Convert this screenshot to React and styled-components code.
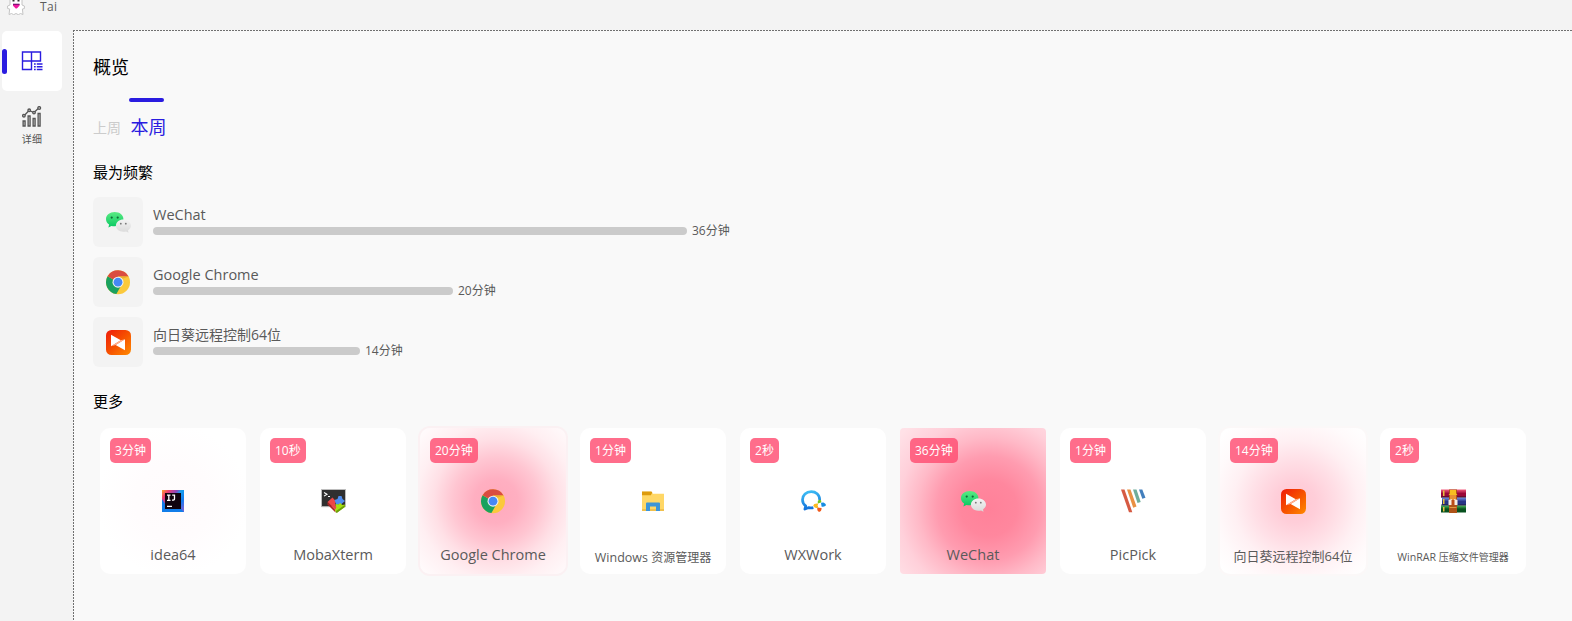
import React from "react";
import styled, { createGlobalStyle } from "styled-components";

const Global = createGlobalStyle`
  *{box-sizing:border-box}
  body{margin:0;background:#f3f3f3;overflow:hidden;font-family:"Open Sans","Noto Sans CJK SC",sans-serif}
  svg{display:block}
`;
const Window = styled.div`height:100vh;display:flex;flex-direction:column;overflow:hidden;`;
const TitleBar = styled.header`height:30px;flex:none;display:flex;align-items:flex-start;padding-left:7px;`;
const AppName = styled.span`margin-left:15px;font-size:12px;line-height:14px;color:#5c5c5c;letter-spacing:.3px;`;
const Body = styled.div`flex:1;display:flex;min-height:0;`;
const Sidebar = styled.nav`width:73px;flex:none;padding:1px 0 0 2px;display:flex;flex-direction:column;gap:5px;`;
const NavItem = styled.div`
  position:relative;width:60px;height:60px;border-radius:5px;display:flex;flex-direction:column;align-items:center;
  justify-content:center;gap:5px;background:${p => p.$active ? "#fff" : "transparent"};
  color:#555;font-size:10px;line-height:15px;
`;
const NavMarker = styled.i`position:absolute;left:0;top:18px;width:5px;height:25px;border-radius:2.5px;background:#2a1ce0;`;
const NavText = styled.span`letter-spacing:.2px;`;
const Main = styled.main`
  flex:1;padding:25px 0 0 20px;
  background:
    repeating-linear-gradient(90deg,#707070 0 2px,#f9f9f9 2px 3px) 0 0/100% 1px no-repeat,
    repeating-linear-gradient(180deg,#707070 0 2px,#f9f9f9 2px 3px) 0 0/1px 100% no-repeat,
    #f9f9f9;
`;
const Title = styled.h1`margin:0;font-size:18px;line-height:24px;font-weight:400;color:#000;`;
const Tabs = styled.div`display:flex;align-items:flex-end;gap:9.5px;height:43px;margin-top:19px;`;
const Tab = styled.div`
  display:flex;flex-direction:column;justify-content:space-between;line-height:26px;
  font-size:${p => p.$active ? 18 : 14}px;color:${p => p.$active ? "#2a1ce0" : "#ccc"};
  height:${p => p.$active ? "43px" : "auto"};
  padding-bottom:${p => p.$active ? 1 : 0}px;
`;
const TabLine = styled.i`width:35px;height:4px;border-radius:2px;background:#2a1ce0;margin-left:-1.5px;`;
const Section = styled.h2`margin:${p => p.$top}px 0 0;font-size:15px;line-height:22px;font-weight:400;color:#000;`;
const Ranking = styled.div`display:flex;flex-direction:column;gap:10px;margin-top:14px;`;
const Row = styled.div`display:flex;gap:10px;height:50px;`;
const IconTile = styled.div`width:50px;height:50px;border-radius:6px;background:#f3f3f3;display:flex;align-items:center;justify-content:center;`;
const Info = styled.div`padding-top:7px;`;
const AppLabel = styled.div`
  font-size:${p => p.$size}px;line-height:22px;color:#5a5a5a;white-space:nowrap;
`;
const Latin = styled.span`font-size:${p => p.$scale || 1}em;`;
const BarLine = styled.div`display:flex;align-items:center;gap:5px;height:10px;font-size:12px;color:#5a5a5a;white-space:nowrap;`;
const BarTime = styled.span`line-height:16px;`;
const Bar = styled.div`height:8px;border-radius:4px;background:#cbcbcb;`;
const Grid = styled.div`display:flex;gap:14px;margin:16px 0 0 7px;`;
const Card = styled.article`
  width:146px;height:146px;flex:none;border-radius:${p => p.$radius || 10}px;padding:10px;
  display:flex;flex-direction:column;align-items:center;background:${p => p.$glow || "#fff"};
  box-shadow:${p => p.$ring ? `0 0 0 2px ${p.$ring}` : "none"};
`;
const Badge = styled.span`
  align-self:flex-start;height:25px;line-height:25px;padding:0 5px;border-radius:5px;font-size:12px;color:#fff;
  background:rgba(255,75,112,.81);white-space:nowrap;
`;
const CardIcon = styled.div`margin-top:26px;height:25px;`;
const CardName = styled(AppLabel)`margin-top:auto;margin-bottom:-${p => p.$drop || 2}px;`;

const Svg = ({ children, size = 25, box = 25 }) => <svg width={size} height={size} viewBox={`0 0 ${box} ${box}`}>{children}</svg>;

const Ghost = () => (
  <svg width="18" height="15" viewBox="0 0 18 15">
    <path d="M3-2h12v7l2.400 1v2.500l-2 .5.600 5.500-2.500-1-2.200 1.200L9 13.500l-2.300 1.200-2.200-1.200-2.500 1L2.700 9 .6 8.500V6L3 5z" fill="#fff" stroke="#c4c4c4" />
    <path d="M5.500 0h2v1.500h-2zM10.500 0h2v1.500h-2z" fill="#333" />
    <path d="M6 4h6.500v1.800L9.800 8.500H8.700L6 5.800z" fill="#f01aa0" /><path d="M6 3.700h6.500v1.200H6z" fill="#7a1170" />
  </svg>
);
const OverviewIcon = () => (
  <svg width="22" height="20" viewBox="0 0 22 20" fill="none" stroke="#2a1ce0">
    <path d="M1.500 1h18v9h-18zM10.500 1v17.500h-9V10M10.500 10v8.500" strokeWidth="1.400" />
    <path d="M13 13h1.700M15.800 13H21.500M13 15.700h1.700M15.800 15.700H21.500M13 18.500h1.700M15.800 18.500H21.500" strokeWidth="1.400" />
  </svg>
);
const DetailIcon = () => (
  <svg width="20" height="21" viewBox="0 0 20 21" fill="#ccc" stroke="#555" strokeWidth="1.300">
    <path d="M1.100 15h2v5h-2zM6.100 10h2v10h-2zM11.100 12.500h2V20h-2zM16.100 7.500h2V20h-2z" />
    <path d="M2.500 9.200L7 4.500l5 2 4.500-4.200" fill="none" />
    <circle cx="1.900" cy="9.700" r="1.300" /><circle cx="7.200" cy="4.300" r="1.300" /><circle cx="12" cy="6.600" r="1.300" /><circle cx="17.200" cy="2" r="1.400" />
  </svg>
);
const WeChat = () => (
  <Svg>
    <defs>
      <linearGradient id="wg" x2="0" y2="1"><stop stopColor="#5bea83" /><stop offset="1" stopColor="#07c862" /></linearGradient>
      <linearGradient id="ww" x2="0" y2="1"><stop stopColor="#f3f3f3" /><stop offset="1" stopColor="#dadada" /></linearGradient>
    </defs>
    <path d="M8.700 2.100C3.800 2.100 0 5.200 0 9.100c0 2.300 1.200 4.200 3.100 5.500l-.7 3 3-1.700c1 .3 2.100.4 3.300.4 4.800 0 8.700-3 8.700-7.200s-3.900-7-8.700-7z" fill="url(#wg)" />
    <path d="M17.400 9.400c-4.200 0-7.500 2.700-7.500 6.200s3.300 6.200 7.500 6.200c1 0 1.900-.1 2.700-.4l2.400 1.300-.5-2.300c1.800-1.100 3-2.800 3-4.800 0-3.500-3.400-6.200-7.600-6.200z" fill="url(#ww)" />
    <circle cx="5.700" cy="7.600" r="1.100" fill="#106b37" /><circle cx="11.700" cy="7.600" r="1.100" fill="#106b37" />
    <circle cx="14.800" cy="13.700" r=".9" fill="#777" /><circle cx="19.800" cy="13.700" r=".9" fill="#777" />
  </Svg>
);
const Chrome = () => (
  <Svg>
    <circle cx="12" cy="12.200" r="12" fill="#fbc93c" />
    <path d="M12 12.200L1.600 6.200a12 12 0 0 0 8.800 17.900l4.800-8.500z" fill="#1aa15f" />
    <path d="M12 12.200L1.600 6.200A12 12 0 0 1 22.500 6.500H12z" fill="#da4c40" />
    <path d="M12 6.600h10.800l-6.300 2.200z" fill="#eeb12f" />
    <circle cx="12" cy="12.200" r="5.500" fill="#f1f1f1" /><circle cx="12" cy="12.200" r="4.400" fill="#4688f4" />
  </Svg>
);
const Sunflower = () => (
  <Svg>
    <defs><linearGradient id="sf" x2="1" y2="1"><stop stopColor="#ee1b0a" /><stop offset=".5" stopColor="#f65000" /><stop offset="1" stopColor="#ff8b00" /></linearGradient></defs>
    <rect width="25" height="25" rx="5.500" fill="url(#sf)" />
    <path d="M5 4.800L14.800 10.200 5 16.200z" fill="#fff" /><path d="M19 9.200v11L9.600 14.900z" fill="#fff" />
    <path d="M14.800 10.200l4.200-1-9.400 5.700-4.600 1.300z" fill="#ffb69a" />
  </Svg>
);
const Idea = () => (
  <Svg>
    <defs><linearGradient id="id" x2="1" y2=".8"><stop stopColor="#fba92b" /><stop offset=".2" stopColor="#ef3e70" /><stop offset=".43" stopColor="#8b49be" /><stop offset=".55" stopColor="#15a0ee" /><stop offset=".8" stopColor="#147bf0" /><stop offset="1" stopColor="#6c65db" /></linearGradient></defs>
    <rect x="1" y="1" width="22" height="22" fill="url(#id)" /><path d="M1 10l3 5v5h16l3 3H1z" fill="#117de9" />
    <rect x="4" y="4" width="16" height="16" fill="#10030d" />
    <path d="M6 6.200h3.500M7.800 6.200v5M6 11.300h3.500M11.200 6.200h2.300v3.800q0 1.300-2.500 1.200M6 17.300h5" stroke="#fff" strokeWidth="1.300" fill="none" />
  </Svg>
);
const Moba = () => (
  <Svg>
    <path d="M.5.500h24v17.200H.5z" fill="#303030" stroke="#bdbdbd" />
    <path d="M3 3.500l3 1.800L3 7.100M7 7.500h2" stroke="#fff" strokeWidth="1.100" fill="none" />
    <path d="M6.500 13l5-4.500 3.500 4-1 3 2 3-1.500 2.500z" fill="#ec4647" /><path d="M6.500 13v2.500l8 8V21z" fill="#ac2221" />
    <path d="M13.500 11l3-1 1-3 3 0 1 3 2.500 2-3.500 3-5 1z" fill="#4f8ef0" />
    <path d="M14.300 15l3 .5 2-1.500 2 2 3-.5-1 3-7.500 5-2.300-2.500 2-2z" fill="#a5df10" /><path d="M15.800 21.500l8-5.500v2l-8 6-1.300-1z" fill="#6b9f0a" />
  </Svg>
);
const Folder = () => (
  <Svg>
    <path d="M1 2.800h9l2 2h11v17H1z" fill="#ffd766" /><path d="M1 2.500h9.500l.8 1-1.500 2.700H1z" fill="#dd9b0c" />
    <path d="M1 20h22v2H1z" fill="#f0c04d" />
    <path d="M5 22v-7.500q0-1 1-1h12q1 0 1 1V22h-4v-4.500H9V22z" fill="#3d95d7" />
  </Svg>
);
const WxWork = () => (
  <Svg>
    <defs><linearGradient id="wx" x2=".2" y2="1"><stop stopColor="#3ebff5" /><stop offset="1" stopColor="#1473db" /></linearGradient></defs>
    <path d="M18.700 11C18.700 5.600 14.700 2.700 10.300 2.700 5.100 2.700 1.500 6.200 1.500 10.800c0 2.700 1.200 4.700 3.200 6.100l-.8 3.200 4-1.500q2.200.5 4.500 0" fill="none" stroke="url(#wx)" strokeWidth="2.700" strokeLinejoin="round" />
    <path d="M18.500 10.500q-2.500 1-1.500 4l3-1q1-2.500-1.500-3z" fill="#72c51c" /><path d="M20 13.800l2.500-.3q2.600 1.500 2.500 2.800-1.500 2-4.500 1.200z" fill="#168de1" />
    <path d="M16.500 18.500l4 .5q.5 3.500-2.500 4-2.500-1.500-1.500-4.500z" fill="#f15a1b" /><path d="M12.200 16.500q.7-2.500 4.800-2l.2 4q-3 1.700-5-2z" fill="#fdb91f" />
    <circle cx="18.400" cy="16.500" r="1.700" fill="#fff" />
  </Svg>
);
const PicPick = () => (
  <Svg>
    <path d="M0 .5h3.500l7.800 22.700H8z" fill="#d65a42" /><path d="M6 .5h3.500l6 17-3.300 1.200z" fill="#e99043" />
    <path d="M12 .5h3.500l4.200 12.500-3.200 1z" fill="#70ad9a" /><path d="M18 .5h3.300l3.200 8.200-3.200 1z" fill="#437fbd" />
  </Svg>
);
const WinRar = () => (
  <Svg>
    <defs>
      {[["ra", "#f35b7d", "#9b0838"], ["rb", "#7790e5", "#273486"], ["rc", "#4dbb5b", "#07511e"]].map(([id, a, b]) => (
        <linearGradient id={id} key={id} x2="0" y2="1"><stop stopColor={a} /><stop offset=".5" stopColor={b} /><stop offset="1" stopColor={b} /></linearGradient>
      ))}
    </defs>
    <path d="M0 .5h25v8H0z" fill="url(#ra)" /><path d="M1 8.500h24v8H1z" fill="url(#rb)" /><path d="M0 16.500h25v7H0z" fill="url(#rc)" />
    <path d="M0 8h25M0 16h25" stroke="#25162a" strokeWidth=".8" />
    <path d="M2 1.500h1.500v5.500H2zM2 10h1.500v5H2zM2 18h1.500v4.500H2z" fill="#e5c03d" />
    <path d="M8 .5h8v23.500H8z" fill="#ae5319" /><path d="M9 1h6v3.500l1.500 1.500h-9L9 4.500z" fill="#f8bd20" />
    <path d="M9 6h6v4q-3 3-6 0z" fill="#e99133" /><path d="M7.500 11l3-1 1.500 2.500 1.500-2.500 3 1v5h-9z" fill="#f7eee2" />
    <path d="M10.500 11h3v5h-3z" fill="#bd4d17" /><path d="M8.500 18h7v1h-7z" fill="#e1973e" />
  </Svg>
);

const ranking = [
  { icon: <WeChat />, name: "WeChat", size: 14.5, width: 534, time: "36" },
  { icon: <Chrome />, name: "Google Chrome", size: 14.5, width: 300, time: "20" },
  { icon: <Sunflower />, name: "向日葵远程控制64位", size: 14, width: 207, time: "14" },
];
const cards = [
  { icon: <Idea />, name: "idea64", size: 14.5, time: "3", unit: "分钟", glow: "radial-gradient(circle,#fffbfc 0,#fffcfd 38px,#fff 76px)" },
  { icon: <Moba />, name: "MobaXterm", size: 14.5, time: "10", unit: "秒" },
  { icon: <Chrome />, name: "Google Chrome", size: 14.5, time: "20", unit: "分钟", ring: "#fbf1f3",
    glow: "radial-gradient(circle at 52% 50%,#ffa9bc 0,#ffafc1 22px,#ffc6d2 43px,#ffe0e6 62px,#ffeff2 78px,#fffafb 100px)" },
  { icon: <Folder />, name: <><Latin $scale={1.04}>Windows </Latin>资源管理器</>, size: 12, drop: 5, time: "1", unit: "分钟" },
  { icon: <WxWork />, name: "WXWork", size: 14.5, time: "2", unit: "秒" },
  { icon: <WeChat />, name: "WeChat", size: 14.5, time: "36", unit: "分钟", radius: 4,
    glow: "radial-gradient(circle at 61% 55%,#ff8199 0,#ff879e 28px,#ff9cb0 52px,#ffb9c7 71px,#ffd0da 90px,#ffe1e7 115px)" },
  { icon: <PicPick />, name: "PicPick", size: 14.5, time: "1", unit: "分钟" },
  { icon: <Sunflower />, name: "向日葵远程控制64位", size: 13, drop: 3, time: "14", unit: "分钟", ring: "#fbf8f8",
    glow: "radial-gradient(circle at 52% 51%,#ffc8d4 0,#ffced9 20px,#ffdfe6 42px,#fff0f3 62px,#fffafb 82px,#fff 100px)" },
  { icon: <WinRar />, name: <><Latin $scale={1.06}>WinRAR </Latin>压缩文件管理器</>, size: 10, drop: 4, time: "2", unit: "秒" },
];

export default function App() {
  return (
    <Window>
      <Global />
      <TitleBar><Ghost /><AppName>Tai</AppName></TitleBar>
      <Body>
        <Sidebar>
          <NavItem $active><NavMarker /><OverviewIcon /></NavItem>
          <NavItem><DetailIcon /><NavText>详细</NavText></NavItem>
        </Sidebar>
        <Main>
          <Title>概览</Title>
          <Tabs>
            <Tab>上周</Tab>
            <Tab $active><TabLine />本周</Tab>
          </Tabs>
          <Section $top={20}>最为频繁</Section>
          <Ranking>
            {ranking.map((r, i) => (
              <Row key={i}>
                <IconTile>{r.icon}</IconTile>
                <Info>
                  <AppLabel $size={r.size}>{r.name}</AppLabel>
                  <BarLine><Bar style={{ width: r.width }} /><BarTime>{r.time}分钟</BarTime></BarLine>
                </Info>
              </Row>
            ))}
          </Ranking>
          <Section $top={23}>更多</Section>
          <Grid>
            {cards.map((c, i) => (
              <Card key={i} $glow={c.glow} $radius={c.radius} $ring={c.ring}>
                <Badge>{c.time}{c.unit}</Badge>
                <CardIcon>{c.icon}</CardIcon>
                <CardName $size={c.size} $drop={c.drop}>{c.name}</CardName>
              </Card>
            ))}
          </Grid>
        </Main>
      </Body>
    </Window>
  );
}
